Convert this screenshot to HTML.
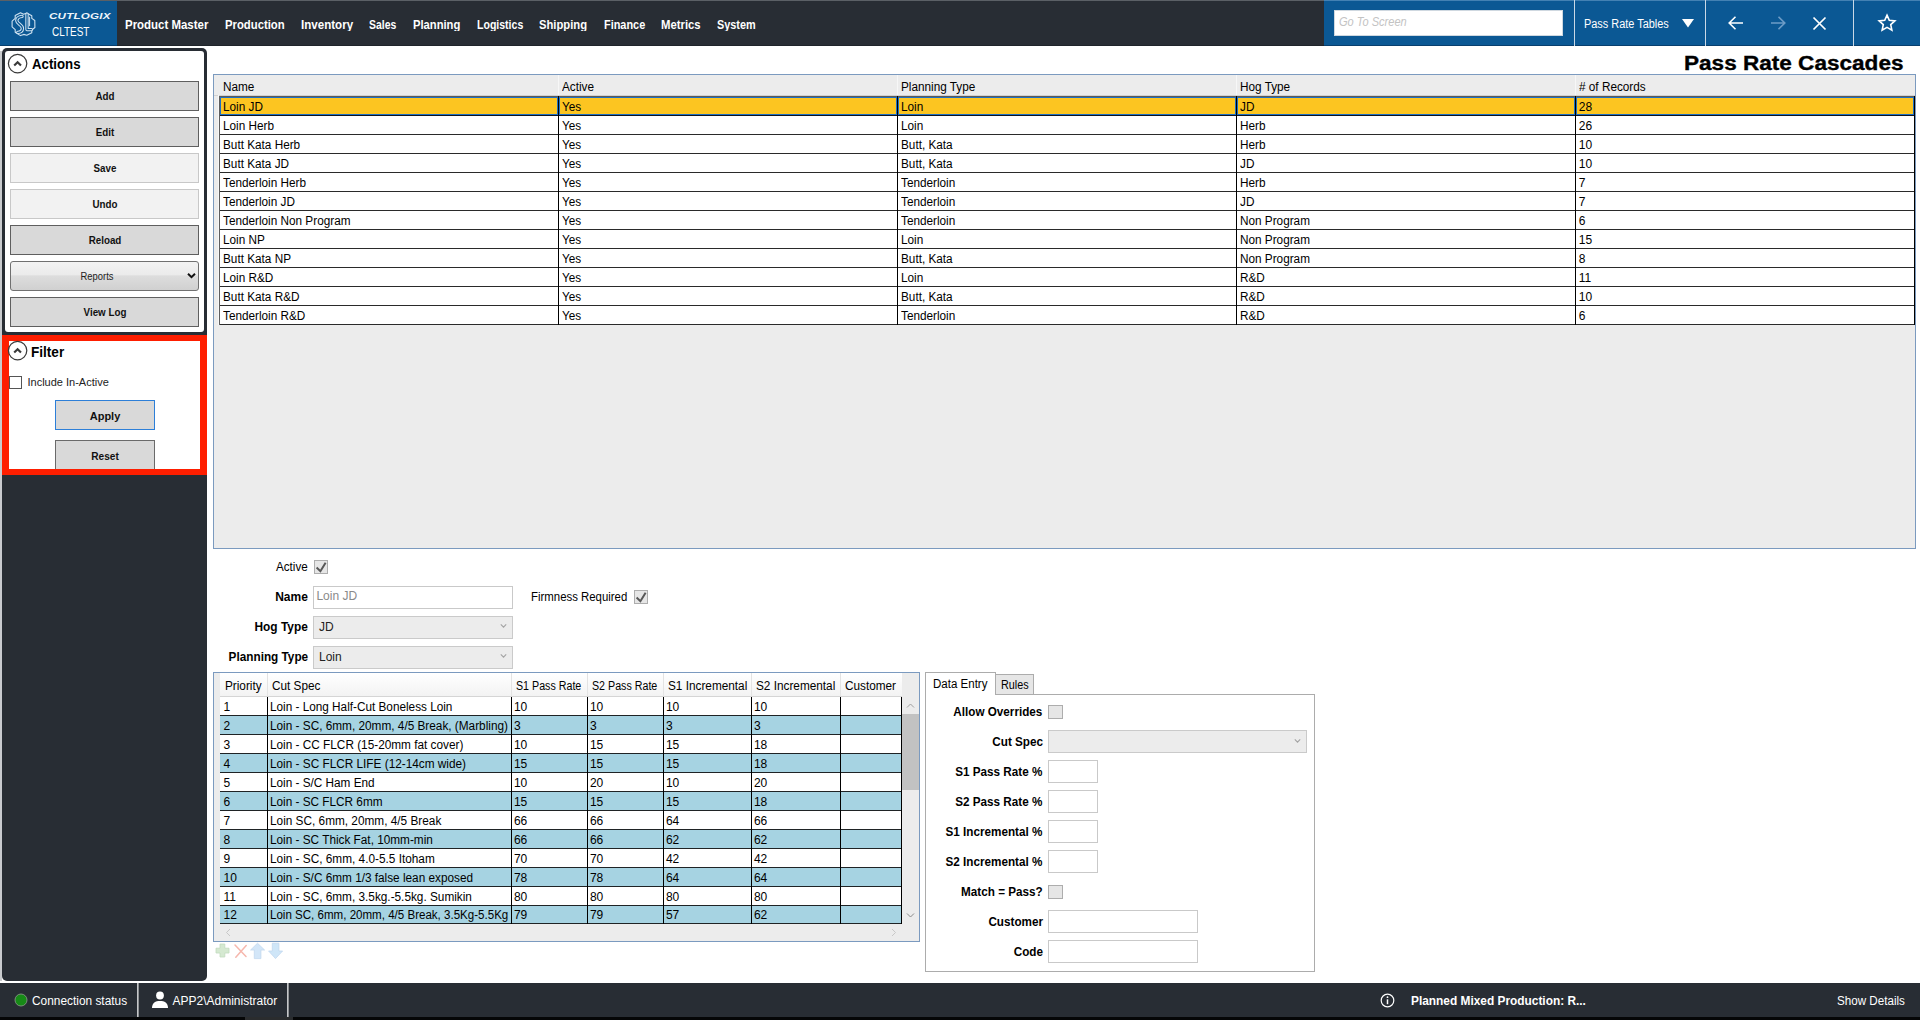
<!DOCTYPE html>
<html><head><meta charset="utf-8"><title>Pass Rate Cascades</title><style>*{margin:0;padding:0}
html,body{width:1920px;height:1020px;overflow:hidden;background:#fff}
body{position:relative;font-family:"Liberation Sans",sans-serif}
div,span,svg{position:absolute}
span{white-space:nowrap}</style></head><body>
<div style="left:0px;top:0px;width:1920px;height:1020px;background:#ffffff"></div>
<div style="left:0px;top:0px;width:1920px;height:46px;background:#282d34"></div>
<div style="left:0px;top:0px;width:117px;height:46px;background:#0b5894"></div>
<div style="left:0px;top:0px;width:1920px;height:1px;background:#5b6066"></div>
<div style="left:0px;top:45px;width:1920px;height:1px;background:#1f242a"></div>
<div style="left:0px;top:45px;width:117px;height:1px;background:#083f6e"></div>
<div style="left:1324px;top:0px;width:596px;height:46px;background:#0b5894"></div>
<div style="left:1324px;top:45px;width:596px;height:1px;background:#083f6e"></div>
<div style="left:1324px;top:0px;width:596px;height:1px;background:#4381b3"></div>
<div style="left:1574px;top:0px;width:1px;height:46px;background:#c9d8e6"></div>
<div style="left:1705px;top:0px;width:1px;height:46px;background:#c9d8e6"></div>
<div style="left:1853px;top:0px;width:1px;height:46px;background:#c9d8e6"></div>
<svg style="left:8px;top:8px" width="32" height="32" viewBox="0 0 32 32" fill="none" stroke-linejoin="round" stroke-linecap="round">
<path d="M7.2 7.5 L12.5 4.7 L15.6 6.3 L18.8 5 L23.8 7.8 L23.8 10.4 L26.8 12.5 L26.9 19.5 L23.8 22 L23.8 24.8 L18.8 27.3 L15.7 26.4 L12.5 27.6 L7.2 24.2 L7.2 21.6 L4.1 18.8 L4.1 13.2 L7.2 10.4 Z" stroke="#cfe2f1" stroke-width="1.1"/>
<path d="M14 8.4 C10.2 8.8 8.8 10.4 8.8 12.8 C8.8 15.6 14.4 16.8 14.4 20.2 C14.4 22.8 12.6 24.2 9.8 24.4" stroke="#cfe2f1" stroke-width="3.4"/>
<path d="M14 8.4 C10.2 8.8 8.8 10.4 8.8 12.8 C8.8 15.6 14.4 16.8 14.4 20.2 C14.4 22.8 12.6 24.2 9.8 24.4" stroke="#0b5894" stroke-width="1.3"/>
<path d="M19 6.2 V21.6 H23.4" stroke="#cfe2f1" stroke-width="3.4"/>
<path d="M19 6.2 V21.6 H23.4" stroke="#0b5894" stroke-width="1.3"/>
<path d="M21.6 9.2 V17.8" stroke="#cfe2f1" stroke-width="1"/>
</svg>
<span style="left:48.6px;transform-origin:0 0;top:10.8px;font-size:10px;line-height:10px;color:#eef4fa;font-weight:bold;font-style:italic;transform:scale(1.16,0.97);letter-spacing:0.2px;transform-origin:0 88%;">CUTLOGIX</span>
<span style="left:52px;transform-origin:0 0;top:26px;font-size:12px;line-height:12px;color:#ffffff;transform:scaleX(0.83);">CLTEST</span>
<div style="left:0;top:0;width:1324px;height:31px;overflow:hidden">
<span style="left:125.2px;transform-origin:0 0;top:18px;font-size:13px;line-height:13px;color:#ffffff;font-weight:bold;transform:scaleX(0.881);">Product Master</span>
<span style="left:225.1px;transform-origin:0 0;top:18px;font-size:13px;line-height:13px;color:#ffffff;font-weight:bold;transform:scaleX(0.869);">Production</span>
<span style="left:300.9px;transform-origin:0 0;top:18px;font-size:13px;line-height:13px;color:#ffffff;font-weight:bold;transform:scaleX(0.89);">Inventory</span>
<span style="left:369.2px;transform-origin:0 0;top:18px;font-size:13px;line-height:13px;color:#ffffff;font-weight:bold;transform:scaleX(0.803);">Sales</span>
<span style="left:412.9px;transform-origin:0 0;top:18px;font-size:13px;line-height:13px;color:#ffffff;font-weight:bold;transform:scaleX(0.862);">Planning</span>
<span style="left:476.7px;transform-origin:0 0;top:18px;font-size:13px;line-height:13px;color:#ffffff;font-weight:bold;transform:scaleX(0.811);">Logistics</span>
<span style="left:539.2px;transform-origin:0 0;top:18px;font-size:13px;line-height:13px;color:#ffffff;font-weight:bold;transform:scaleX(0.863);">Shipping</span>
<span style="left:603.9px;transform-origin:0 0;top:18px;font-size:13px;line-height:13px;color:#ffffff;font-weight:bold;transform:scaleX(0.839);">Finance</span>
<span style="left:661.4px;transform-origin:0 0;top:18px;font-size:13px;line-height:13px;color:#ffffff;font-weight:bold;transform:scaleX(0.87);">Metrics</span>
<span style="left:717.3px;transform-origin:0 0;top:18px;font-size:13px;line-height:13px;color:#ffffff;font-weight:bold;transform:scaleX(0.837);">System</span>
</div>
<div style="left:1334px;top:10px;width:229px;height:26px;background:#ffffff;border:1px solid #cfd8e0;box-sizing:border-box"></div>
<span style="left:1339px;transform-origin:0 0;top:16.3px;font-size:12px;line-height:12px;color:#c3c3c3;font-style:italic;transform:scaleX(0.92);">Go To Screen</span>
<span style="left:1584.2px;transform-origin:0 0;top:18.4px;font-size:12px;line-height:12px;color:#ffffff;transform:scaleX(0.91);">Pass Rate Tables</span>
<svg style="left:1681px;top:18px" width="14" height="10" viewBox="0 0 14 10"><path d="M1 1 L13 1 L7 9.5 Z" fill="#ffffff"/></svg>
<svg style="left:1726px;top:14px" width="20" height="18" viewBox="0 0 20 18" fill="none" stroke="#ffffff" stroke-width="1.6"><path d="M17 9 L3.5 9 M9.5 2.8 L3.2 9 L9.5 15.2"/></svg>
<svg style="left:1768px;top:14px" width="20" height="18" viewBox="0 0 20 18" fill="none" stroke="#6d9cc6" stroke-width="1.6"><path d="M3 9 L16.5 9 M10.5 2.8 L16.8 9 L10.5 15.2"/></svg>
<svg style="left:1811px;top:15px" width="17" height="17" viewBox="0 0 17 17" fill="none" stroke="#ffffff" stroke-width="1.7"><path d="M2.5 2.5 L14.5 14.5 M14.5 2.5 L2.5 14.5"/></svg>
<svg style="left:1877px;top:13px" width="20" height="20" viewBox="0 0 20 20" fill="none" stroke="#ffffff" stroke-width="1.6" stroke-linejoin="miter"><path d="M10.00 2.10 L12.29 7.24 L17.89 7.84 L13.71 11.61 L14.88 17.11 L10.00 14.30 L5.12 17.11 L6.29 11.61 L2.11 7.84 L7.71 7.24 Z"/></svg>
<span style="left:1684px;transform-origin:0 0;top:52.8px;font-size:20px;line-height:20px;color:#000000;font-weight:bold;transform:scaleX(1.128);-webkit-text-stroke:0.35px #000;">Pass Rate Cascades</span>
<div style="left:0px;top:51px;width:2px;height:930px;background:#c9cbce"></div>
<div style="left:2px;top:48px;width:205px;height:933px;background:#282d34;border-radius:5px"></div>
<div style="left:5px;top:51px;width:199px;height:281px;background:#ffffff;border-radius:3px"></div>
<svg style="left:7px;top:53px" width="22" height="22" viewBox="0 0 22 22" fill="none" stroke="#3a3a3a"><circle cx="10.6" cy="10.6" r="9.2" stroke-width="1.25"/><path d="M7.2 12.6 L10.6 9.2 L14 12.6" stroke-width="2.1"/></svg>
<span style="left:32px;transform-origin:0 0;top:57.3px;font-size:14px;line-height:14px;color:#000;font-weight:bold;transform:scaleX(0.945);">Actions</span>
<div style="left:10px;top:81px;width:189px;height:30px;background:#d9d9d9;border:1px solid #5f5f5f;box-sizing:border-box"></div>
<span style="left:104.5px;transform-origin:50% 0;top:91.4px;font-size:11px;line-height:11px;color:#111;font-weight:bold;transform:translateX(-50%) scaleX(0.89);">Add</span>
<div style="left:10px;top:117px;width:189px;height:30px;background:#d9d9d9;border:1px solid #5f5f5f;box-sizing:border-box"></div>
<span style="left:104.5px;transform-origin:50% 0;top:127.4px;font-size:11px;line-height:11px;color:#111;font-weight:bold;transform:translateX(-50%) scaleX(0.89);">Edit</span>
<div style="left:10px;top:153px;width:189px;height:30px;background:#f2f2f2;border:1px solid #c8c8c8;box-sizing:border-box"></div>
<span style="left:104.5px;transform-origin:50% 0;top:163.4px;font-size:11px;line-height:11px;color:#111;font-weight:bold;transform:translateX(-50%) scaleX(0.89);">Save</span>
<div style="left:10px;top:189px;width:189px;height:30px;background:#f2f2f2;border:1px solid #c8c8c8;box-sizing:border-box"></div>
<span style="left:104.5px;transform-origin:50% 0;top:199.4px;font-size:11px;line-height:11px;color:#111;font-weight:bold;transform:translateX(-50%) scaleX(0.89);">Undo</span>
<div style="left:10px;top:225px;width:189px;height:30px;background:#d9d9d9;border:1px solid #5f5f5f;box-sizing:border-box"></div>
<span style="left:104.5px;transform-origin:50% 0;top:235.4px;font-size:11px;line-height:11px;color:#111;font-weight:bold;transform:translateX(-50%) scaleX(0.89);">Reload</span>
<div style="left:10px;top:297px;width:189px;height:30px;background:#d9d9d9;border:1px solid #5f5f5f;box-sizing:border-box"></div>
<span style="left:104.5px;transform-origin:50% 0;top:307.4px;font-size:11px;line-height:11px;color:#111;font-weight:bold;transform:translateX(-50%) scaleX(0.89);">View Log</span>
<div style="left:10px;top:261px;width:189px;height:30px;background:linear-gradient(#f3f3f3 0%,#ebebeb 45%,#dddddd 50%,#d0d0d0 100%);border:1px solid #707070;border-radius:3px;box-sizing:border-box"></div>
<span style="left:97.3px;transform-origin:50% 0;top:272px;font-size:10px;line-height:10px;color:#222;transform:translateX(-50%) scaleX(0.94);">Reports</span>
<svg style="left:186px;top:271px" width="11" height="9" viewBox="0 0 11 9" fill="none" stroke="#111" stroke-width="2"><path d="M2 2.8 L5.5 6.2 L9 2.8"/></svg>
<div style="left:2px;top:335px;width:205px;height:140px;background:#fe1e00"></div>
<div style="left:9px;top:341px;width:191px;height:128px;background:#ffffff"></div>
<svg style="left:7px;top:340px" width="22" height="22" viewBox="0 0 22 22" fill="none" stroke="#3a3a3a"><circle cx="10.6" cy="10.6" r="9.2" stroke-width="1.25"/><path d="M7.2 12.6 L10.6 9.2 L14 12.6" stroke-width="2.1"/></svg>
<span style="left:31.4px;transform-origin:0 0;top:344.5px;font-size:14px;line-height:14px;color:#000;font-weight:bold;transform:scaleX(0.97);">Filter</span>
<div style="left:9px;top:376px;width:13px;height:13px;background:#fff;border:1px solid #555;box-sizing:border-box"></div>
<span style="left:27.5px;transform-origin:0 0;top:377.3px;font-size:11px;line-height:11px;color:#222;">Include In-Active</span>
<div style="left:55px;top:400px;width:100px;height:30px;background:#d9d9d9;border:1px solid #2d7fd8;box-sizing:border-box"></div>
<span style="left:105px;transform-origin:50% 0;top:411.4px;font-size:11px;line-height:11px;color:#111;font-weight:bold;transform:translateX(-50%) scaleX(1.0);">Apply</span>
<div style="left:55px;top:440px;width:100px;height:29px;background:#d9d9d9;border:1px solid #6a6a6a;border-bottom:none;box-sizing:border-box"></div>
<span style="left:104.8px;transform-origin:50% 0;top:451px;font-size:11px;line-height:11px;color:#111;font-weight:bold;transform:translateX(-50%) scaleX(0.92);">Reset</span>
<div style="left:213px;top:74px;width:1703px;height:475px;background:#ececec;border:1px solid #7b9abf;box-sizing:border-box"></div>
<div style="left:214px;top:75px;width:1701px;height:20px;background:#ececec"></div>
<div style="left:214px;top:95px;width:1701px;height:1px;background:#d2d2d2"></div>
<div style="left:218px;top:95px;width:1px;height:230px;background:#f8f8f8"></div>
<span style="left:223.3px;transform-origin:0 0;top:81px;font-size:12px;line-height:12px;color:#000;transform:scaleX(0.98);">Name</span>
<span style="left:562.3px;transform-origin:0 0;top:81px;font-size:12px;line-height:12px;color:#000;transform:scaleX(0.98);">Active</span>
<div style="left:558px;top:75px;width:1px;height:20px;background:#f7f7f7"></div>
<span style="left:901.3px;transform-origin:0 0;top:81px;font-size:12px;line-height:12px;color:#000;transform:scaleX(0.98);">Planning Type</span>
<div style="left:897px;top:75px;width:1px;height:20px;background:#f7f7f7"></div>
<span style="left:1240.3px;transform-origin:0 0;top:81px;font-size:12px;line-height:12px;color:#000;transform:scaleX(0.98);">Hog Type</span>
<div style="left:1236px;top:75px;width:1px;height:20px;background:#f7f7f7"></div>
<span style="left:1579.3px;transform-origin:0 0;top:81px;font-size:12px;line-height:12px;color:#000;transform:scaleX(0.98);"># of Records</span>
<div style="left:1575px;top:75px;width:1px;height:20px;background:#f7f7f7"></div>
<div style="left:219px;top:96px;width:1696px;height:229px;background:#ffffff"></div>
<div style="left:219px;top:96px;width:1696px;height:1px;background:#5a5a5a"></div>
<div style="left:219px;top:96px;width:1px;height:229px;background:#5f5f5f"></div>
<div style="left:220px;top:97px;width:338px;height:18px;background:#fcc521;border:1px solid #1f6fc2;box-sizing:border-box"></div>
<div style="left:559px;top:97px;width:338px;height:18px;background:#fcc521;border:1px solid #1f6fc2;box-sizing:border-box"></div>
<div style="left:898px;top:97px;width:338px;height:18px;background:#fcc521;border:1px solid #1f6fc2;box-sizing:border-box"></div>
<div style="left:1237px;top:97px;width:338px;height:18px;background:#fcc521;border:1px solid #1f6fc2;box-sizing:border-box"></div>
<div style="left:1576px;top:97px;width:338px;height:18px;background:#fcc521;border:1px solid #1f6fc2;box-sizing:border-box"></div>
<div style="left:220px;top:115px;width:1695px;height:1px;background:#0c1424"></div>
<span style="left:222.8px;transform-origin:0 0;top:100.8px;font-size:12px;line-height:12px;color:#000;transform:scaleX(0.98);">Loin JD</span>
<span style="left:561.8px;transform-origin:0 0;top:100.8px;font-size:12px;line-height:12px;color:#000;transform:scaleX(0.98);">Yes</span>
<span style="left:900.8px;transform-origin:0 0;top:100.8px;font-size:12px;line-height:12px;color:#000;transform:scaleX(0.98);">Loin</span>
<span style="left:1239.8px;transform-origin:0 0;top:100.8px;font-size:12px;line-height:12px;color:#000;transform:scaleX(0.98);">JD</span>
<span style="left:1578.8px;transform-origin:0 0;top:100.8px;font-size:12px;line-height:12px;color:#000;">28</span>
<div style="left:220px;top:134px;width:1695px;height:1px;background:#2a2a2a"></div>
<span style="left:222.8px;transform-origin:0 0;top:119.80000000000001px;font-size:12px;line-height:12px;color:#000;transform:scaleX(0.98);">Loin Herb</span>
<span style="left:561.8px;transform-origin:0 0;top:119.80000000000001px;font-size:12px;line-height:12px;color:#000;transform:scaleX(0.98);">Yes</span>
<span style="left:900.8px;transform-origin:0 0;top:119.80000000000001px;font-size:12px;line-height:12px;color:#000;transform:scaleX(0.98);">Loin</span>
<span style="left:1239.8px;transform-origin:0 0;top:119.80000000000001px;font-size:12px;line-height:12px;color:#000;transform:scaleX(0.98);">Herb</span>
<span style="left:1578.8px;transform-origin:0 0;top:119.80000000000001px;font-size:12px;line-height:12px;color:#000;">26</span>
<div style="left:220px;top:153px;width:1695px;height:1px;background:#2a2a2a"></div>
<span style="left:222.8px;transform-origin:0 0;top:138.8px;font-size:12px;line-height:12px;color:#000;transform:scaleX(0.98);">Butt Kata Herb</span>
<span style="left:561.8px;transform-origin:0 0;top:138.8px;font-size:12px;line-height:12px;color:#000;transform:scaleX(0.98);">Yes</span>
<span style="left:900.8px;transform-origin:0 0;top:138.8px;font-size:12px;line-height:12px;color:#000;transform:scaleX(0.98);">Butt, Kata</span>
<span style="left:1239.8px;transform-origin:0 0;top:138.8px;font-size:12px;line-height:12px;color:#000;transform:scaleX(0.98);">Herb</span>
<span style="left:1578.8px;transform-origin:0 0;top:138.8px;font-size:12px;line-height:12px;color:#000;">10</span>
<div style="left:220px;top:172px;width:1695px;height:1px;background:#2a2a2a"></div>
<span style="left:222.8px;transform-origin:0 0;top:157.8px;font-size:12px;line-height:12px;color:#000;transform:scaleX(0.98);">Butt Kata JD</span>
<span style="left:561.8px;transform-origin:0 0;top:157.8px;font-size:12px;line-height:12px;color:#000;transform:scaleX(0.98);">Yes</span>
<span style="left:900.8px;transform-origin:0 0;top:157.8px;font-size:12px;line-height:12px;color:#000;transform:scaleX(0.98);">Butt, Kata</span>
<span style="left:1239.8px;transform-origin:0 0;top:157.8px;font-size:12px;line-height:12px;color:#000;transform:scaleX(0.98);">JD</span>
<span style="left:1578.8px;transform-origin:0 0;top:157.8px;font-size:12px;line-height:12px;color:#000;">10</span>
<div style="left:220px;top:191px;width:1695px;height:1px;background:#2a2a2a"></div>
<span style="left:222.8px;transform-origin:0 0;top:176.8px;font-size:12px;line-height:12px;color:#000;transform:scaleX(0.98);">Tenderloin Herb</span>
<span style="left:561.8px;transform-origin:0 0;top:176.8px;font-size:12px;line-height:12px;color:#000;transform:scaleX(0.98);">Yes</span>
<span style="left:900.8px;transform-origin:0 0;top:176.8px;font-size:12px;line-height:12px;color:#000;transform:scaleX(0.98);">Tenderloin</span>
<span style="left:1239.8px;transform-origin:0 0;top:176.8px;font-size:12px;line-height:12px;color:#000;transform:scaleX(0.98);">Herb</span>
<span style="left:1578.8px;transform-origin:0 0;top:176.8px;font-size:12px;line-height:12px;color:#000;">7</span>
<div style="left:220px;top:210px;width:1695px;height:1px;background:#2a2a2a"></div>
<span style="left:222.8px;transform-origin:0 0;top:195.8px;font-size:12px;line-height:12px;color:#000;transform:scaleX(0.98);">Tenderloin JD</span>
<span style="left:561.8px;transform-origin:0 0;top:195.8px;font-size:12px;line-height:12px;color:#000;transform:scaleX(0.98);">Yes</span>
<span style="left:900.8px;transform-origin:0 0;top:195.8px;font-size:12px;line-height:12px;color:#000;transform:scaleX(0.98);">Tenderloin</span>
<span style="left:1239.8px;transform-origin:0 0;top:195.8px;font-size:12px;line-height:12px;color:#000;transform:scaleX(0.98);">JD</span>
<span style="left:1578.8px;transform-origin:0 0;top:195.8px;font-size:12px;line-height:12px;color:#000;">7</span>
<div style="left:220px;top:229px;width:1695px;height:1px;background:#2a2a2a"></div>
<span style="left:222.8px;transform-origin:0 0;top:214.8px;font-size:12px;line-height:12px;color:#000;transform:scaleX(0.98);">Tenderloin Non Program</span>
<span style="left:561.8px;transform-origin:0 0;top:214.8px;font-size:12px;line-height:12px;color:#000;transform:scaleX(0.98);">Yes</span>
<span style="left:900.8px;transform-origin:0 0;top:214.8px;font-size:12px;line-height:12px;color:#000;transform:scaleX(0.98);">Tenderloin</span>
<span style="left:1239.8px;transform-origin:0 0;top:214.8px;font-size:12px;line-height:12px;color:#000;transform:scaleX(0.98);">Non Program</span>
<span style="left:1578.8px;transform-origin:0 0;top:214.8px;font-size:12px;line-height:12px;color:#000;">6</span>
<div style="left:220px;top:248px;width:1695px;height:1px;background:#2a2a2a"></div>
<span style="left:222.8px;transform-origin:0 0;top:233.8px;font-size:12px;line-height:12px;color:#000;transform:scaleX(0.98);">Loin NP</span>
<span style="left:561.8px;transform-origin:0 0;top:233.8px;font-size:12px;line-height:12px;color:#000;transform:scaleX(0.98);">Yes</span>
<span style="left:900.8px;transform-origin:0 0;top:233.8px;font-size:12px;line-height:12px;color:#000;transform:scaleX(0.98);">Loin</span>
<span style="left:1239.8px;transform-origin:0 0;top:233.8px;font-size:12px;line-height:12px;color:#000;transform:scaleX(0.98);">Non Program</span>
<span style="left:1578.8px;transform-origin:0 0;top:233.8px;font-size:12px;line-height:12px;color:#000;">15</span>
<div style="left:220px;top:267px;width:1695px;height:1px;background:#2a2a2a"></div>
<span style="left:222.8px;transform-origin:0 0;top:252.8px;font-size:12px;line-height:12px;color:#000;transform:scaleX(0.98);">Butt Kata NP</span>
<span style="left:561.8px;transform-origin:0 0;top:252.8px;font-size:12px;line-height:12px;color:#000;transform:scaleX(0.98);">Yes</span>
<span style="left:900.8px;transform-origin:0 0;top:252.8px;font-size:12px;line-height:12px;color:#000;transform:scaleX(0.98);">Butt, Kata</span>
<span style="left:1239.8px;transform-origin:0 0;top:252.8px;font-size:12px;line-height:12px;color:#000;transform:scaleX(0.98);">Non Program</span>
<span style="left:1578.8px;transform-origin:0 0;top:252.8px;font-size:12px;line-height:12px;color:#000;">8</span>
<div style="left:220px;top:286px;width:1695px;height:1px;background:#2a2a2a"></div>
<span style="left:222.8px;transform-origin:0 0;top:271.8px;font-size:12px;line-height:12px;color:#000;transform:scaleX(0.98);">Loin R&amp;D</span>
<span style="left:561.8px;transform-origin:0 0;top:271.8px;font-size:12px;line-height:12px;color:#000;transform:scaleX(0.98);">Yes</span>
<span style="left:900.8px;transform-origin:0 0;top:271.8px;font-size:12px;line-height:12px;color:#000;transform:scaleX(0.98);">Loin</span>
<span style="left:1239.8px;transform-origin:0 0;top:271.8px;font-size:12px;line-height:12px;color:#000;transform:scaleX(0.98);">R&amp;D</span>
<span style="left:1578.8px;transform-origin:0 0;top:271.8px;font-size:12px;line-height:12px;color:#000;">11</span>
<div style="left:220px;top:305px;width:1695px;height:1px;background:#2a2a2a"></div>
<span style="left:222.8px;transform-origin:0 0;top:290.8px;font-size:12px;line-height:12px;color:#000;transform:scaleX(0.98);">Butt Kata R&amp;D</span>
<span style="left:561.8px;transform-origin:0 0;top:290.8px;font-size:12px;line-height:12px;color:#000;transform:scaleX(0.98);">Yes</span>
<span style="left:900.8px;transform-origin:0 0;top:290.8px;font-size:12px;line-height:12px;color:#000;transform:scaleX(0.98);">Butt, Kata</span>
<span style="left:1239.8px;transform-origin:0 0;top:290.8px;font-size:12px;line-height:12px;color:#000;transform:scaleX(0.98);">R&amp;D</span>
<span style="left:1578.8px;transform-origin:0 0;top:290.8px;font-size:12px;line-height:12px;color:#000;">10</span>
<div style="left:220px;top:324px;width:1695px;height:1px;background:#2a2a2a"></div>
<span style="left:222.8px;transform-origin:0 0;top:309.8px;font-size:12px;line-height:12px;color:#000;transform:scaleX(0.98);">Tenderloin R&amp;D</span>
<span style="left:561.8px;transform-origin:0 0;top:309.8px;font-size:12px;line-height:12px;color:#000;transform:scaleX(0.98);">Yes</span>
<span style="left:900.8px;transform-origin:0 0;top:309.8px;font-size:12px;line-height:12px;color:#000;transform:scaleX(0.98);">Tenderloin</span>
<span style="left:1239.8px;transform-origin:0 0;top:309.8px;font-size:12px;line-height:12px;color:#000;transform:scaleX(0.98);">R&amp;D</span>
<span style="left:1578.8px;transform-origin:0 0;top:309.8px;font-size:12px;line-height:12px;color:#000;">6</span>
<div style="left:558px;top:96px;width:1px;height:229px;background:#000"></div>
<div style="left:897px;top:96px;width:1px;height:229px;background:#000"></div>
<div style="left:1236px;top:96px;width:1px;height:229px;background:#000"></div>
<div style="left:1575px;top:96px;width:1px;height:229px;background:#000"></div>
<div style="left:1914px;top:96px;width:1px;height:229px;background:#000"></div>
<span style="right:1612.2px;transform-origin:100% 0;top:561.3px;font-size:12px;line-height:12px;color:#000;transform:scaleX(0.97);">Active</span>
<div style="left:314px;top:560px;width:14px;height:14px;background:#e6e6e6;border:1px solid #adadad;box-sizing:border-box"></div>
<svg style="left:314px;top:560px" width="14" height="14" viewBox="0 0 14 14" fill="none" stroke="#585858" stroke-width="2"><path d="M2.6 7.6 L6.4 11.2 L11.6 2.8"/></svg>
<span style="right:1612.2px;transform-origin:100% 0;top:591.2px;font-size:12px;line-height:12px;color:#000;font-weight:bold;">Name</span>
<div style="left:313px;top:586px;width:200px;height:23px;background:#fff;border:1px solid #c9c9c9;box-sizing:border-box"></div>
<span style="left:316.4px;transform-origin:0 0;top:589.5px;font-size:12px;line-height:12px;color:#8a8a8a;">Loin JD</span>
<span style="left:531.2px;transform-origin:0 0;top:591.2px;font-size:12px;line-height:12px;color:#000;transform:scaleX(0.95);">Firmness Required</span>
<div style="left:634px;top:590px;width:14px;height:14px;background:#e6e6e6;border:1px solid #adadad;box-sizing:border-box"></div>
<svg style="left:634px;top:590px" width="14" height="14" viewBox="0 0 14 14" fill="none" stroke="#585858" stroke-width="2"><path d="M2.6 7.6 L6.4 11.2 L11.6 2.8"/></svg>
<span style="right:1612.2px;transform-origin:100% 0;top:621.1px;font-size:12px;line-height:12px;color:#000;font-weight:bold;transform:scaleX(0.99);">Hog Type</span>
<div style="left:313px;top:616px;width:200px;height:23px;background:#ececec;border:1px solid #cacaca;box-sizing:border-box"></div>
<span style="left:319px;transform-origin:0 0;top:621.1px;font-size:12px;line-height:12px;color:#222;">JD</span>
<svg style="left:500px;top:623px" width="7" height="6" viewBox="0 0 7 6" fill="none" stroke="#a4a4a4" stroke-width="1.1"><path d="M0.8 1.4 L3.5 4.2 L6.2 1.4"/></svg>
<span style="right:1612.2px;transform-origin:100% 0;top:651.1px;font-size:12px;line-height:12px;color:#000;font-weight:bold;transform:scaleX(0.98);">Planning Type</span>
<div style="left:313px;top:646px;width:200px;height:23px;background:#ececec;border:1px solid #cacaca;box-sizing:border-box"></div>
<span style="left:319px;transform-origin:0 0;top:651.1px;font-size:12px;line-height:12px;color:#222;">Loin</span>
<svg style="left:500px;top:653px" width="7" height="6" viewBox="0 0 7 6" fill="none" stroke="#a4a4a4" stroke-width="1.1"><path d="M0.8 1.4 L3.5 4.2 L6.2 1.4"/></svg>
<div style="left:213px;top:672px;width:707px;height:270px;background:#ececec;border:1px solid #7b9abf;box-sizing:border-box"></div>
<div style="left:220px;top:673px;width:682px;height:23px;background:linear-gradient(#ffffff,#f3f3f3)"></div>
<div style="left:220px;top:696px;width:682px;height:1px;background:#d5d5d5"></div>
<span style="left:225px;transform-origin:0 0;top:679.9px;font-size:12px;line-height:12px;color:#000;transform:scaleX(0.98);">Priority</span>
<span style="left:272px;transform-origin:0 0;top:679.9px;font-size:12px;line-height:12px;color:#000;transform:scaleX(0.98);">Cut Spec</span>
<div style="left:267px;top:673px;width:1px;height:23px;background:#e3e3e3"></div>
<span style="left:516px;transform-origin:0 0;top:679.9px;font-size:12px;line-height:12px;color:#000;transform:scaleX(0.89);">S1 Pass Rate</span>
<div style="left:511px;top:673px;width:1px;height:23px;background:#e3e3e3"></div>
<span style="left:592px;transform-origin:0 0;top:679.9px;font-size:12px;line-height:12px;color:#000;transform:scaleX(0.89);">S2 Pass Rate</span>
<div style="left:587px;top:673px;width:1px;height:23px;background:#e3e3e3"></div>
<span style="left:668px;transform-origin:0 0;top:679.9px;font-size:12px;line-height:12px;color:#000;transform:scaleX(0.982);">S1 Incremental</span>
<div style="left:663px;top:673px;width:1px;height:23px;background:#e3e3e3"></div>
<span style="left:756px;transform-origin:0 0;top:679.9px;font-size:12px;line-height:12px;color:#000;transform:scaleX(0.982);">S2 Incremental</span>
<div style="left:751px;top:673px;width:1px;height:23px;background:#e3e3e3"></div>
<span style="left:845px;transform-origin:0 0;top:679.9px;font-size:12px;line-height:12px;color:#000;transform:scaleX(0.98);">Customer</span>
<div style="left:840px;top:673px;width:1px;height:23px;background:#e3e3e3"></div>
<div style="left:220px;top:697px;width:682px;height:227px;background:#ffffff"></div>
<div style="left:220px;top:715px;width:682px;height:1px;background:#1f2325"></div>
<span style="left:223.5px;transform-origin:0 0;top:700.6px;font-size:12px;line-height:12px;color:#000;">1</span>
<span style="left:269.9px;transform-origin:0 0;top:700.6px;font-size:12px;line-height:12px;color:#000;transform:scaleX(0.98);">Loin - Long Half-Cut Boneless Loin</span>
<span style="left:513.9px;transform-origin:0 0;top:700.6px;font-size:12px;line-height:12px;color:#000;">10</span>
<span style="left:589.9px;transform-origin:0 0;top:700.6px;font-size:12px;line-height:12px;color:#000;">10</span>
<span style="left:665.9px;transform-origin:0 0;top:700.6px;font-size:12px;line-height:12px;color:#000;">10</span>
<span style="left:753.9px;transform-origin:0 0;top:700.6px;font-size:12px;line-height:12px;color:#000;">10</span>
<div style="left:220px;top:716px;width:681px;height:18px;background:#a6d3e2"></div>
<div style="left:220px;top:734px;width:682px;height:1px;background:#1f2325"></div>
<span style="left:223.5px;transform-origin:0 0;top:719.6px;font-size:12px;line-height:12px;color:#000;">2</span>
<span style="left:269.9px;transform-origin:0 0;top:719.6px;font-size:12px;line-height:12px;color:#000;transform:scaleX(0.983);">Loin - SC, 6mm, 20mm, 4/5 Break, (Marbling)</span>
<span style="left:513.9px;transform-origin:0 0;top:719.6px;font-size:12px;line-height:12px;color:#000;">3</span>
<span style="left:589.9px;transform-origin:0 0;top:719.6px;font-size:12px;line-height:12px;color:#000;">3</span>
<span style="left:665.9px;transform-origin:0 0;top:719.6px;font-size:12px;line-height:12px;color:#000;">3</span>
<span style="left:753.9px;transform-origin:0 0;top:719.6px;font-size:12px;line-height:12px;color:#000;">3</span>
<div style="left:220px;top:753px;width:682px;height:1px;background:#1f2325"></div>
<span style="left:223.5px;transform-origin:0 0;top:738.6px;font-size:12px;line-height:12px;color:#000;">3</span>
<span style="left:269.9px;transform-origin:0 0;top:738.6px;font-size:12px;line-height:12px;color:#000;transform:scaleX(0.983);">Loin - CC FLCR (15-20mm fat cover)</span>
<span style="left:513.9px;transform-origin:0 0;top:738.6px;font-size:12px;line-height:12px;color:#000;">10</span>
<span style="left:589.9px;transform-origin:0 0;top:738.6px;font-size:12px;line-height:12px;color:#000;">15</span>
<span style="left:665.9px;transform-origin:0 0;top:738.6px;font-size:12px;line-height:12px;color:#000;">15</span>
<span style="left:753.9px;transform-origin:0 0;top:738.6px;font-size:12px;line-height:12px;color:#000;">18</span>
<div style="left:220px;top:754px;width:681px;height:18px;background:#a6d3e2"></div>
<div style="left:220px;top:772px;width:682px;height:1px;background:#1f2325"></div>
<span style="left:223.5px;transform-origin:0 0;top:757.6px;font-size:12px;line-height:12px;color:#000;">4</span>
<span style="left:269.9px;transform-origin:0 0;top:757.6px;font-size:12px;line-height:12px;color:#000;transform:scaleX(0.983);">Loin - SC FLCR LIFE (12-14cm wide)</span>
<span style="left:513.9px;transform-origin:0 0;top:757.6px;font-size:12px;line-height:12px;color:#000;">15</span>
<span style="left:589.9px;transform-origin:0 0;top:757.6px;font-size:12px;line-height:12px;color:#000;">15</span>
<span style="left:665.9px;transform-origin:0 0;top:757.6px;font-size:12px;line-height:12px;color:#000;">15</span>
<span style="left:753.9px;transform-origin:0 0;top:757.6px;font-size:12px;line-height:12px;color:#000;">18</span>
<div style="left:220px;top:791px;width:682px;height:1px;background:#1f2325"></div>
<span style="left:223.5px;transform-origin:0 0;top:776.6px;font-size:12px;line-height:12px;color:#000;">5</span>
<span style="left:269.9px;transform-origin:0 0;top:776.6px;font-size:12px;line-height:12px;color:#000;transform:scaleX(0.98);">Loin - S/C Ham End</span>
<span style="left:513.9px;transform-origin:0 0;top:776.6px;font-size:12px;line-height:12px;color:#000;">10</span>
<span style="left:589.9px;transform-origin:0 0;top:776.6px;font-size:12px;line-height:12px;color:#000;">20</span>
<span style="left:665.9px;transform-origin:0 0;top:776.6px;font-size:12px;line-height:12px;color:#000;">10</span>
<span style="left:753.9px;transform-origin:0 0;top:776.6px;font-size:12px;line-height:12px;color:#000;">20</span>
<div style="left:220px;top:792px;width:681px;height:18px;background:#a6d3e2"></div>
<div style="left:220px;top:810px;width:682px;height:1px;background:#1f2325"></div>
<span style="left:223.5px;transform-origin:0 0;top:795.6px;font-size:12px;line-height:12px;color:#000;">6</span>
<span style="left:269.9px;transform-origin:0 0;top:795.6px;font-size:12px;line-height:12px;color:#000;transform:scaleX(0.981);">Loin - SC FLCR 6mm</span>
<span style="left:513.9px;transform-origin:0 0;top:795.6px;font-size:12px;line-height:12px;color:#000;">15</span>
<span style="left:589.9px;transform-origin:0 0;top:795.6px;font-size:12px;line-height:12px;color:#000;">15</span>
<span style="left:665.9px;transform-origin:0 0;top:795.6px;font-size:12px;line-height:12px;color:#000;">15</span>
<span style="left:753.9px;transform-origin:0 0;top:795.6px;font-size:12px;line-height:12px;color:#000;">18</span>
<div style="left:220px;top:829px;width:682px;height:1px;background:#1f2325"></div>
<span style="left:223.5px;transform-origin:0 0;top:814.6px;font-size:12px;line-height:12px;color:#000;">7</span>
<span style="left:269.9px;transform-origin:0 0;top:814.6px;font-size:12px;line-height:12px;color:#000;transform:scaleX(0.984);">Loin SC, 6mm, 20mm, 4/5 Break</span>
<span style="left:513.9px;transform-origin:0 0;top:814.6px;font-size:12px;line-height:12px;color:#000;">66</span>
<span style="left:589.9px;transform-origin:0 0;top:814.6px;font-size:12px;line-height:12px;color:#000;">66</span>
<span style="left:665.9px;transform-origin:0 0;top:814.6px;font-size:12px;line-height:12px;color:#000;">64</span>
<span style="left:753.9px;transform-origin:0 0;top:814.6px;font-size:12px;line-height:12px;color:#000;">66</span>
<div style="left:220px;top:830px;width:681px;height:18px;background:#a6d3e2"></div>
<div style="left:220px;top:848px;width:682px;height:1px;background:#1f2325"></div>
<span style="left:223.5px;transform-origin:0 0;top:833.6px;font-size:12px;line-height:12px;color:#000;">8</span>
<span style="left:269.9px;transform-origin:0 0;top:833.6px;font-size:12px;line-height:12px;color:#000;transform:scaleX(0.982);">Loin - SC Thick Fat, 10mm-min</span>
<span style="left:513.9px;transform-origin:0 0;top:833.6px;font-size:12px;line-height:12px;color:#000;">66</span>
<span style="left:589.9px;transform-origin:0 0;top:833.6px;font-size:12px;line-height:12px;color:#000;">66</span>
<span style="left:665.9px;transform-origin:0 0;top:833.6px;font-size:12px;line-height:12px;color:#000;">62</span>
<span style="left:753.9px;transform-origin:0 0;top:833.6px;font-size:12px;line-height:12px;color:#000;">62</span>
<div style="left:220px;top:867px;width:682px;height:1px;background:#1f2325"></div>
<span style="left:223.5px;transform-origin:0 0;top:852.6px;font-size:12px;line-height:12px;color:#000;">9</span>
<span style="left:269.9px;transform-origin:0 0;top:852.6px;font-size:12px;line-height:12px;color:#000;transform:scaleX(0.984);">Loin - SC, 6mm, 4.0-5.5 Itoham</span>
<span style="left:513.9px;transform-origin:0 0;top:852.6px;font-size:12px;line-height:12px;color:#000;">70</span>
<span style="left:589.9px;transform-origin:0 0;top:852.6px;font-size:12px;line-height:12px;color:#000;">70</span>
<span style="left:665.9px;transform-origin:0 0;top:852.6px;font-size:12px;line-height:12px;color:#000;">42</span>
<span style="left:753.9px;transform-origin:0 0;top:852.6px;font-size:12px;line-height:12px;color:#000;">42</span>
<div style="left:220px;top:868px;width:681px;height:18px;background:#a6d3e2"></div>
<div style="left:220px;top:886px;width:682px;height:1px;background:#1f2325"></div>
<span style="left:223.5px;transform-origin:0 0;top:871.6px;font-size:12px;line-height:12px;color:#000;">10</span>
<span style="left:269.9px;transform-origin:0 0;top:871.6px;font-size:12px;line-height:12px;color:#000;transform:scaleX(0.982);">Loin - S/C 6mm 1/3 false lean exposed</span>
<span style="left:513.9px;transform-origin:0 0;top:871.6px;font-size:12px;line-height:12px;color:#000;">78</span>
<span style="left:589.9px;transform-origin:0 0;top:871.6px;font-size:12px;line-height:12px;color:#000;">78</span>
<span style="left:665.9px;transform-origin:0 0;top:871.6px;font-size:12px;line-height:12px;color:#000;">64</span>
<span style="left:753.9px;transform-origin:0 0;top:871.6px;font-size:12px;line-height:12px;color:#000;">64</span>
<div style="left:220px;top:905px;width:682px;height:1px;background:#1f2325"></div>
<span style="left:223.5px;transform-origin:0 0;top:890.6px;font-size:12px;line-height:12px;color:#000;">11</span>
<span style="left:269.9px;transform-origin:0 0;top:890.6px;font-size:12px;line-height:12px;color:#000;transform:scaleX(0.983);">Loin - SC, 6mm, 3.5kg.-5.5kg. Sumikin</span>
<span style="left:513.9px;transform-origin:0 0;top:890.6px;font-size:12px;line-height:12px;color:#000;">80</span>
<span style="left:589.9px;transform-origin:0 0;top:890.6px;font-size:12px;line-height:12px;color:#000;">80</span>
<span style="left:665.9px;transform-origin:0 0;top:890.6px;font-size:12px;line-height:12px;color:#000;">80</span>
<span style="left:753.9px;transform-origin:0 0;top:890.6px;font-size:12px;line-height:12px;color:#000;">80</span>
<div style="left:220px;top:906px;width:681px;height:17px;background:#a6d3e2"></div>
<div style="left:220px;top:923px;width:682px;height:1px;background:#1f2325"></div>
<span style="left:223.5px;transform-origin:0 0;top:908.8px;font-size:12px;line-height:12px;color:#000;">12</span>
<span style="left:269.9px;transform-origin:0 0;top:908.8px;font-size:12px;line-height:12px;color:#000;transform:scaleX(0.963);">Loin SC, 6mm, 20mm, 4/5 Break, 3.5Kg-5.5Kg</span>
<span style="left:513.9px;transform-origin:0 0;top:908.8px;font-size:12px;line-height:12px;color:#000;">79</span>
<span style="left:589.9px;transform-origin:0 0;top:908.8px;font-size:12px;line-height:12px;color:#000;">79</span>
<span style="left:665.9px;transform-origin:0 0;top:908.8px;font-size:12px;line-height:12px;color:#000;">57</span>
<span style="left:753.9px;transform-origin:0 0;top:908.8px;font-size:12px;line-height:12px;color:#000;">62</span>
<div style="left:267px;top:697px;width:1px;height:227px;background:#000"></div>
<div style="left:511px;top:697px;width:1px;height:227px;background:#000"></div>
<div style="left:587px;top:697px;width:1px;height:227px;background:#000"></div>
<div style="left:663px;top:697px;width:1px;height:227px;background:#000"></div>
<div style="left:751px;top:697px;width:1px;height:227px;background:#000"></div>
<div style="left:840px;top:697px;width:1px;height:227px;background:#000"></div>
<div style="left:901px;top:697px;width:1px;height:227px;background:#000"></div>
<div style="left:902px;top:673px;width:17px;height:268px;background:#ececec"></div>
<div style="left:902px;top:714px;width:17px;height:76px;background:#c2c2c2"></div>
<svg style="left:905px;top:701px" width="11" height="9" viewBox="0 0 11 9" fill="none" stroke="#a0a0a0" stroke-width="1"><path d="M2 6.5 L5.5 3 L9 6.5"/></svg>
<svg style="left:905px;top:911px" width="11" height="9" viewBox="0 0 11 9" fill="none" stroke="#8a8a8a" stroke-width="1"><path d="M2 2.5 L5.5 6 L9 2.5"/></svg>
<svg style="left:224px;top:927px" width="9" height="11" viewBox="0 0 9 11" fill="none" stroke="#c8c8c8" stroke-width="1"><path d="M6 2 L2.5 5.5 L6 9"/></svg>
<svg style="left:889px;top:927px" width="9" height="11" viewBox="0 0 9 11" fill="none" stroke="#c8c8c8" stroke-width="1"><path d="M3 2 L6.5 5.5 L3 9"/></svg>
<svg style="left:215px;top:943px" width="16" height="16" viewBox="0 0 16 16"><path d="M5 1 H9.8 V5.2 H14 V10 H9.8 V14 H5 V10 H1 V5.2 H5 Z" fill="#d5e9d1" stroke="#c2dbbe" stroke-width="0.8"/></svg>
<svg style="left:233px;top:943px" width="15" height="16" viewBox="0 0 15 16" fill="none" stroke="#f6b7ad" stroke-width="1.5" stroke-linecap="round"><path d="M2 2 L13 13.5 M13.2 2.6 L2.8 14.2"/></svg>
<svg style="left:250px;top:942px" width="16" height="18" viewBox="0 0 16 18"><path d="M7.5 1.2 L14.6 8 H10.9 V16.6 H4.3 V8 H0.6 Z" fill="#d3e6f8" stroke="#c1d8ef" stroke-width="0.8" stroke-linejoin="round"/></svg>
<svg style="left:268px;top:942px" width="16" height="18" viewBox="0 0 16 18"><path d="M7.5 16.6 L14.6 9 H10.9 V1.2 H4.3 V9 H0.6 Z" fill="#cfe6f8" stroke="#c1d8ef" stroke-width="0.8" stroke-linejoin="round"/></svg>
<div style="left:925px;top:694px;width:390px;height:278px;background:#fff;border:1px solid #acacac;box-sizing:border-box"></div>
<div style="left:995px;top:674px;width:39px;height:21px;background:#e6e6e6;border:1px solid #acacac;box-sizing:border-box"></div>
<div style="left:925px;top:672px;width:71px;height:23px;background:#fff;border:1px solid #acacac;border-bottom:none;box-sizing:border-box"></div>
<span style="left:932.8px;transform-origin:0 0;top:677.8px;font-size:12px;line-height:12px;color:#000;transform:scaleX(0.96);">Data Entry</span>
<span style="left:1000.5px;transform-origin:0 0;top:678.8px;font-size:12px;line-height:12px;color:#000;transform:scaleX(0.9);">Rules</span>
<span style="right:877.2px;transform-origin:100% 0;top:706px;font-size:12px;line-height:12px;color:#000;font-weight:bold;transform:scaleX(0.975);">Allow Overrides</span>
<div style="left:1048px;top:705px;width:15px;height:14px;background:#e6e6e6;border:1px solid #adadad;box-sizing:border-box"></div>
<span style="right:877.2px;transform-origin:100% 0;top:736px;font-size:12px;line-height:12px;color:#000;font-weight:bold;transform:scaleX(0.975);">Cut Spec</span>
<div style="left:1048px;top:730px;width:259px;height:23px;background:#ececec;border:1px solid #cacaca;box-sizing:border-box"></div>
<svg style="left:1294px;top:738px" width="7" height="6" viewBox="0 0 7 6" fill="none" stroke="#a4a4a4" stroke-width="1.1"><path d="M0.8 1.4 L3.5 4.2 L6.2 1.4"/></svg>
<span style="right:877.2px;transform-origin:100% 0;top:766px;font-size:12px;line-height:12px;color:#000;font-weight:bold;transform:scaleX(0.975);">S1 Pass Rate %</span>
<div style="left:1048px;top:760px;width:50px;height:23px;background:#fff;border:1px solid #c9c9c9;box-sizing:border-box"></div>
<span style="right:877.2px;transform-origin:100% 0;top:796px;font-size:12px;line-height:12px;color:#000;font-weight:bold;transform:scaleX(0.975);">S2 Pass Rate %</span>
<div style="left:1048px;top:790px;width:50px;height:23px;background:#fff;border:1px solid #c9c9c9;box-sizing:border-box"></div>
<span style="right:877.2px;transform-origin:100% 0;top:826px;font-size:12px;line-height:12px;color:#000;font-weight:bold;transform:scaleX(0.975);">S1 Incremental %</span>
<div style="left:1048px;top:820px;width:50px;height:23px;background:#fff;border:1px solid #c9c9c9;box-sizing:border-box"></div>
<span style="right:877.2px;transform-origin:100% 0;top:856px;font-size:12px;line-height:12px;color:#000;font-weight:bold;transform:scaleX(0.975);">S2 Incremental %</span>
<div style="left:1048px;top:850px;width:50px;height:23px;background:#fff;border:1px solid #c9c9c9;box-sizing:border-box"></div>
<span style="right:877.2px;transform-origin:100% 0;top:886px;font-size:12px;line-height:12px;color:#000;font-weight:bold;transform:scaleX(0.975);">Match = Pass?</span>
<div style="left:1048px;top:885px;width:15px;height:14px;background:#e6e6e6;border:1px solid #adadad;box-sizing:border-box"></div>
<span style="right:877.2px;transform-origin:100% 0;top:916px;font-size:12px;line-height:12px;color:#000;font-weight:bold;transform:scaleX(0.975);">Customer</span>
<div style="left:1048px;top:910px;width:150px;height:23px;background:#fff;border:1px solid #c9c9c9;box-sizing:border-box"></div>
<span style="right:877.2px;transform-origin:100% 0;top:946px;font-size:12px;line-height:12px;color:#000;font-weight:bold;transform:scaleX(0.975);">Code</span>
<div style="left:1048px;top:940px;width:150px;height:23px;background:#fff;border:1px solid #c9c9c9;box-sizing:border-box"></div>
<div style="left:0px;top:983px;width:1920px;height:34px;background:#282d34"></div>
<div style="left:0px;top:1017px;width:1920px;height:3px;background:#050607"></div>
<div style="left:245px;top:1017px;width:48px;height:3px;background:#2a2c2e"></div>
<div style="left:137px;top:983px;width:1px;height:34px;background:#c4c6c8"></div>
<div style="left:138px;top:983px;width:1px;height:34px;background:#8e9194"></div>
<div style="left:287px;top:983px;width:1px;height:34px;background:#c4c6c8"></div>
<div style="left:288px;top:983px;width:1px;height:34px;background:#8e9194"></div>
<svg style="left:14px;top:993px" width="14" height="14" viewBox="0 0 14 14"><circle cx="7" cy="7" r="6" fill="#178a17" stroke="#8e9a8e" stroke-width="0.8"/></svg>
<span style="left:32px;transform-origin:0 0;top:994.8px;font-size:12px;line-height:12px;color:#ffffff;transform:scaleX(0.99);">Connection status</span>
<svg style="left:151px;top:990px" width="18" height="19" viewBox="0 0 18 19"><circle cx="9" cy="5.5" r="3.9" fill="#fff"/><path d="M1 18 C1 12.8 4.5 11 9 11 C13.5 11 17 12.8 17 18 Z" fill="#fff"/></svg>
<span style="left:172.5px;transform-origin:0 0;top:994.8px;font-size:12px;line-height:12px;color:#ffffff;">APP2\Administrator</span>
<svg style="left:1380px;top:993px" width="15" height="15" viewBox="0 0 15 15" fill="none" stroke="#fff"><circle cx="7.5" cy="7.5" r="6.3" stroke-width="1.2"/><path d="M7.5 6.3 V11.2" stroke-width="1.5"/><circle cx="7.5" cy="4.2" r="0.9" fill="#fff" stroke="none"/></svg>
<span style="left:1410.5px;transform-origin:0 0;top:994.8px;font-size:12px;line-height:12px;color:#ffffff;font-weight:bold;transform:scaleX(0.99);">Planned Mixed Production: R...</span>
<span style="left:1836.5px;transform-origin:0 0;top:994.8px;font-size:12px;line-height:12px;color:#ffffff;transform:scaleX(0.97);">Show Details</span>
</body></html>
